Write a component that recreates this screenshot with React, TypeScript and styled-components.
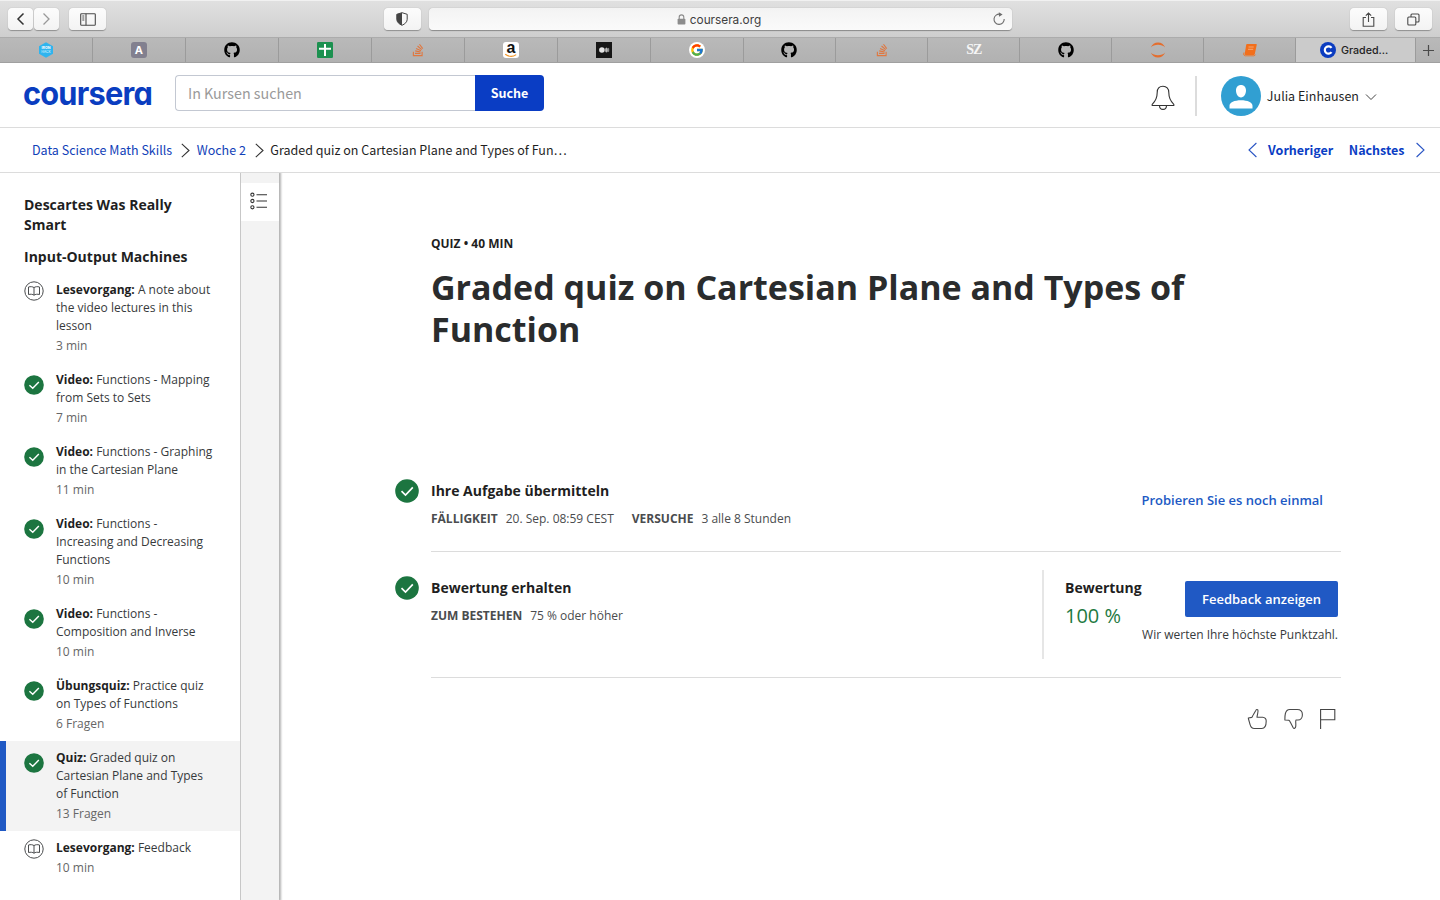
import React from 'react';
import styled, { createGlobalStyle } from 'styled-components';
import { FaGithub, FaStackOverflow } from 'react-icons/fa';
import { FcGoogle } from 'react-icons/fc';

const Global = createGlobalStyle`
  * { box-sizing: border-box; }
  body { margin: 0; background: #fff; overflow: hidden; }
  h1, h2, p, ul { margin: 0; padding: 0; font-weight: inherit; }
  button { border: 0; padding: 0; margin: 0; background: none; font: inherit; color: inherit; }
  svg { display: block; flex: none; }
`;

const sourceSans = `"Noto Sans CJK JP", "Open Sans", sans-serif`;
const openSans = `"Open Sans", "Noto Sans", sans-serif`;

const Page = styled.div`
  width: 1440px;
  height: 900px;
  display: flex;
  flex-direction: column;
  font-family: ${openSans};
  color: #1f1f1f;
  overflow: hidden;
`;

/* Browser chrome */
const Toolbar = styled.div`
  height: 38px;
  flex: none;
  display: flex;
  align-items: center;
  padding: 0 8px;
  background: linear-gradient(#e0e0e0, #cecece);
  border-top: 1px solid #f1f1f1;
  border-bottom: 1px solid #acacac;
`;
const ChromeButton = styled.button<{ $w: number; $ml?: number }>`
  width: ${p => p.$w}px;
  height: 22px;
  margin-left: ${p => p.$ml ?? 0}px;
  border-radius: 4px;
  background: linear-gradient(#fcfcfc, #f3f3f3);
  box-shadow: 0 0.5px 1px rgba(0, 0, 0, 0.32);
  display: flex;
  align-items: center;
  justify-content: center;
  color: #4a4a4a;
`;
const AddressBar = styled.div`
  width: 583px;
  height: 22px;
  margin-left: 8px;
  padding: 0 6px 0 18px;
  border-radius: 4px;
  background: linear-gradient(#f3f3f3, #fafafa);
  box-shadow: 0 0.5px 1px rgba(0, 0, 0, 0.35);
  display: flex;
  align-items: center;
  color: #6c6c6c;
`;
const Address = styled.span`
  flex: 1;
  display: flex;
  align-items: center;
  justify-content: center;
  gap: 4px;
  padding-top: 1px;
  font: 11.8px/22px Inter, sans-serif;
  color: #404040;
`;
const TabBar = styled.div`
  height: 25px;
  flex: none;
  display: flex;
  background: linear-gradient(#b9b9b9, #b1b1b1);
  border-bottom: 1px solid #a0a0a0;
`;
const Tab = styled.div<{ $w: number; $active?: boolean }>`
  width: ${p => p.$w}px;
  display: flex;
  align-items: center;
  justify-content: center;
  gap: 5px;
  padding-right: ${p => (p.$active ? 3 : 0)}px;
  border-right: 1px solid #9b9b9b;
  background: ${p => (p.$active ? '#cbcbcb' : 'transparent')};
  font: 500 10.7px/24px Inter, sans-serif;
  color: #222;
  &:last-child { border-right: 0; }
`;
const TabLabel = styled.span`
  padding-top: 1px;
`;
const Favicon = styled.span<{ $bg: string; $fg?: string; $r?: number }>`
  width: 16px;
  height: 16px;
  border-radius: ${p => p.$r ?? 3}px;
  background: ${p => p.$bg};
  color: ${p => p.$fg ?? '#fff'};
  display: flex;
  align-items: center;
  justify-content: center;
  font: 700 11px/16px Inter, sans-serif;
`;
const PaperLetters = styled.span`
  font: 700 14px/20px "Liberation Serif", serif;
  letter-spacing: -1px;
  color: #f6f6f6;
`;

/* Site header */
const Header = styled.header`
  height: 65px;
  flex: none;
  display: flex;
  align-items: center;
  padding: 0 63px 0 24px;
  border-bottom: 1px solid #dcdcdc;
  font-family: ${sourceSans};
`;
const Logo = styled.svg`
  margin-right: 22px;
  overflow: visible;
`;
const SearchField = styled.div`
  width: 300px;
  height: 36px;
  margin-top: -4px;
  padding-left: 12px;
  border: 1px solid #c3c8d2;
  border-right: 0;
  border-radius: 4px 0 0 4px;
  font-size: 14.3px;
  line-height: 34px;
  color: #9a9a9a;
`;
const SearchButton = styled.button`
  width: 69px;
  height: 36px;
  margin-top: -4px;
  border-radius: 0 4px 4px 0;
  background: #0a3dc4;
  color: #fff;
  font-size: 12.5px;
  font-weight: 700;
  line-height: 36px;
`;
const Account = styled.div`
  margin-left: auto;
  padding-top: 1px;
  display: flex;
  align-items: center;
  font-size: 12.5px;
  line-height: 20px;
`;
const Bell = styled.svg`
  margin-top: 5px;
`;
const Divider = styled.span`
  width: 2px;
  height: 40px;
  margin: 0 24px 0 20px;
  background: #dcdcdc;
`;
const UserName = styled.span`
  margin: 0 6px 0 6px;
  white-space: nowrap;
`;
const Caret = styled.svg`
  margin-top: 3px;
`;

/* Breadcrumb bar */
const CrumbBar = styled.nav`
  height: 45px;
  flex: none;
  display: flex;
  align-items: center;
  padding: 0 15px 0 32px;
  border-bottom: 1px solid #dcdcdc;
  font-family: ${sourceSans};
  font-size: 12.5px;
  line-height: 20px;
  white-space: nowrap;
`;
const Crumb = styled.span<{ $link?: boolean }>`
  color: ${p => (p.$link ? '#1141b8' : '#1f1f1f')};
`;
const CrumbArrow = styled.svg`
  margin: 0 6.5px 0 9px;
`;
const Pager = styled.div`
  margin-left: auto;
  display: flex;
  align-items: center;
  color: #0a3dc4;
  font-weight: 700;
`;
const PagerLabel = styled.span<{ $ml: number; $mr: number }>`
  margin: 0 ${p => p.$mr}px 0 ${p => p.$ml}px;
`;

/* Body */
const Body = styled.div`
  flex: 1;
  min-height: 0;
  display: flex;
`;
const Sidebar = styled.aside`
  width: 240px;
  flex: none;
  padding-top: 22px;
`;
const SectionTitle = styled.h2`
  padding: 0 24px;
  margin-bottom: 12px;
  font-size: 14px;
  font-weight: 700;
  line-height: 20px;
  & + ul { margin-top: -6px; }
`;
const Items = styled.ul`
  list-style: none;
`;
const Item = styled.li<{ $selected?: boolean }>`
  display: flex;
  align-items: flex-start;
  padding: 8px 24px 8px 18px;
  border-left: 6px solid ${p => (p.$selected ? '#2059c4' : 'transparent')};
  background: ${p => (p.$selected ? '#f3f3f3' : 'transparent')};
  background-clip: padding-box;
  font-size: 12px;
  line-height: 18px;
  color: #373a3c;
`;
const ItemIcon = styled.span<{ $done?: boolean }>`
  padding-top: ${p => (p.$done ? 4 : 0)}px;
  margin-right: 12px;
`;
const ItemKind = styled.strong`
  color: #1f1f1f;
  font-weight: 700;
`;
const ItemMeta = styled.p`
  margin-top: 2px;
  color: #666;
`;
const Rail = styled.div`
  width: 39px;
  flex: none;
  padding-top: 10px;
  background: #f3f3f3;
  border-left: 1px solid #c7c7c7;
  box-shadow: 1px 0 2px 1px rgba(0, 0, 0, 0.3);
  clip-path: inset(0 -6px 0 0);
`;
const RailButton = styled.div`
  height: 38px;
  display: flex;
  align-items: center;
  padding: 0 0 3px 9px;
  background: #fff;
`;
const Main = styled.main`
  flex: 1;
  padding: 61px 99px 0 116px;
`;
const Kicker = styled.p`
  padding-left: 36px;
  font-size: 12px;
  font-weight: 700;
  line-height: 20px;
`;
const Title = styled.h1`
  margin-top: 12px;
  padding-left: 36px;
  font-size: 34px;
  font-weight: 700;
  line-height: 42px;
  color: #2a2c2d;
`;
const Step = styled.section<{ $h: number; $mt?: number }>`
  height: ${p => p.$h}px;
  margin-top: ${p => p.$mt ?? 0}px;
  display: flex;
  align-items: flex-start;
`;
const StepContent = styled.div`
  flex: 1;
  height: 100%;
  margin-left: 12px;
  display: flex;
  align-items: flex-start;
  justify-content: space-between;
  border-bottom: 1px solid #dcdcdc;
`;
const StepTitle = styled.h2`
  font-size: 14px;
  font-weight: 700;
  line-height: 24px;
  color: #1f1f1f;
`;
const Facts = styled.p`
  margin-top: 6px;
  display: flex;
  font-size: 12px;
  line-height: 20px;
  color: #4a4c4e;
  white-space: nowrap;
`;
const FactName = styled.strong`
  margin-right: 8px;
  font-weight: 700;
`;
const FactValue = styled.span`
  margin-right: 18px;
`;
const Retry = styled.button`
  margin: 9px 18px 0 0;
  color: #2059c4;
  font-size: 13px;
  font-weight: 600;
  line-height: 24px;
`;
const GradePanel = styled.div`
  width: 299px;
  height: 89px;
  margin-top: -6px;
  padding: 6px 3px 0 21px;
  display: flex;
  justify-content: space-between;
  border-left: 2px solid #e6e6e6;
`;
const Grade = styled.div`
  width: 70px;
  font-size: 20px;
  line-height: 32px;
  color: #1f7a43;
  white-space: nowrap;
`;
const GradeAction = styled.div`
  padding-top: 5px;
  display: flex;
  flex-direction: column;
  align-items: flex-end;
`;
const FeedbackButton = styled.button`
  width: 153px;
  height: 36px;
  border-radius: 2px;
  background: #2059c4;
  color: #fff;
  font-size: 13px;
  font-weight: 600;
  line-height: 36px;
`;
const Note = styled.p`
  margin-top: 8px;
  font-size: 12px;
  line-height: 20px;
  color: #373a3c;
  white-space: nowrap;
`;
const Reactions = styled.div`
  margin: 30px 5px 0 0;
  display: flex;
  justify-content: flex-end;
  gap: 16px;
`;

const Check = ({ size }: { size: number }) => (
  <svg width={size} height={size} viewBox="0 0 24 24">
    <circle cx="12" cy="12" r="11.8" fill="#1c7540" />
    <path d="M6.500 12.200l4 3.800 7.300-7.600" fill="none" stroke="#fff" strokeWidth="1.700" />
  </svg>
);

const Book = () => (
  <svg width="20" height="20" viewBox="0 0 20 20" fill="none" stroke="#4a4c4e" strokeWidth="1">
    <circle cx="10" cy="10" r="9.200" />
    <path d="M10 6.600C8.800 5.600 6.500 5.400 4.500 6v7.500c2-.5 4.300-.3 5.500.7 1.200-1 3.500-1.200 5.500-.7V6c-2-.6-4.300-.4-5.500.6zM10 6.600v7.600" />
  </svg>
);

const Chevron = ({ w, h, dir, color }: { w: number; h: number; dir: 'left' | 'right'; color: string }) => (
  <svg width={w} height={h} viewBox="0 0 9 16" fill="none" stroke={color} strokeWidth="1.1">
    <path d={dir === 'right' ? 'M.6 1l7.400 7-7.400 7' : 'M8.400 1L1 8l7.400 7'} />
  </svg>
);

const HexIcon = () => (
  <svg width="16" height="16" viewBox="0 0 16 16">
    <path d="M8 .3l7 3.900v7.600l-7 3.900-7-3.900V4.200z" fill="#2fb4ee" />
    <text x="8" y="7.300" textAnchor="middle" fontSize="3.600" fontWeight="700" fontFamily="Inter" fill="#fff">IRON</text>
    <text x="8" y="11" textAnchor="middle" fontSize="3.300" fontFamily="Inter" fill="#d6f1fd">HACK</text>
  </svg>
);
const SheetIcon = () => (
  <svg width="16" height="16" viewBox="0 0 16 16">
    <rect width="16" height="16" rx="1.200" fill="#1c9150" />
    <path d="M2 6.700h12M8 2v12" stroke="#fff" strokeWidth="2" />
  </svg>
);
const StoreIcon = () => (
  <svg width="16" height="16" viewBox="0 0 16 16" overflow="visible">
    <rect width="16" height="16" rx="3" fill="#fff" />
    <text x="8" y="10.800" textAnchor="middle" fontSize="16" fontWeight="700" fontFamily="Liberation Sans" fill="#111">a</text>
    <path d="M2.200 12.200c3.600 2.600 8 2.600 11 .4" fill="none" stroke="#f3982a" strokeWidth="1.100" />
  </svg>
);
const MediumIcon = () => (
  <svg width="16" height="16" viewBox="0 0 16 16">
    <rect width="16" height="16" fill="#161616" />
    <circle cx="5.900" cy="8" r="2.800" fill="#e3e3e3" />
    <ellipse cx="10.500" cy="8" rx="1.400" ry="2.600" fill="#b9b9b9" />
    <ellipse cx="12.700" cy="8" rx=".5" ry="2.300" fill="#aaa" />
  </svg>
);
const JupyterIcon = () => (
  <svg width="16" height="16" viewBox="0 0 16 16" fill="#e46e2e">
    <path d="M.8 5.400C2 2.300 4.800.4 8 .4s6 1.900 7.200 5C13.500 3.700 11 2.700 8 2.700S2.500 3.700.8 5.400z" />
    <path d="M.8 10.600c1.200 3.100 4 5 7.200 5s6-1.900 7.200-5C13.500 12.300 11 13.300 8 13.300s-5.500-1-7.200-2.700z" />
  </svg>
);
const NotebookIcon = () => (
  <svg width="14" height="14" viewBox="0 0 14 14">
    <path d="M4 1h9c.6 0 .8.400.7.900l-1.900 9.200c-.1.500-.4.800-.9.800H2.500c-.6 0-.9-.4-.8-.9L3.200 1.700c.1-.4.4-.7.800-.7z" fill="#f26f1c" />
    <path d="M1 9.500c-.8 2 0 3.300 1.300 3.300h8.500c.9 0 1.300-.5 1.500-1.200" fill="none" stroke="#f26f1c" strokeWidth=".9" />
    <path d="M5.500 4h5.200M5 6.300h5.200" stroke="#f8b68c" strokeWidth=".8" />
  </svg>
);

type Entry = { kind: string; name: string; meta: string; done?: boolean; selected?: boolean };
const entries: Entry[] = [
  { kind: 'Lesevorgang:', name: 'A note about the video lectures in this lesson', meta: '3 min' },
  { kind: 'Video:', name: 'Functions - Mapping from Sets to Sets', meta: '7 min', done: true },
  { kind: 'Video:', name: 'Functions - Graphing in the Cartesian Plane', meta: '11 min', done: true },
  { kind: 'Video:', name: 'Functions - Increasing and Decreasing Functions', meta: '10 min', done: true },
  { kind: 'Video:', name: 'Functions - Composition and Inverse', meta: '10 min', done: true },
  { kind: 'Übungsquiz:', name: 'Practice quiz on Types of Functions', meta: '6 Fragen', done: true },
  { kind: 'Quiz:', name: 'Graded quiz on Cartesian Plane and Types of Function', meta: '13 Fragen', done: true, selected: true },
  { kind: 'Lesevorgang:', name: 'Feedback', meta: '10 min' },
];

const Stack = () => <FaStackOverflow size={14} color="#e0773f" />;
const GitHub = () => <FaGithub size={16} color="#000" />;
const tabs: { w: number; icon: React.ReactNode }[] = [
  { w: 93, icon: <HexIcon /> },
  { w: 93, icon: <Favicon $bg="#82808f">A</Favicon> },
  { w: 93, icon: <GitHub /> },
  { w: 93, icon: <SheetIcon /> },
  { w: 93, icon: <Stack /> },
  { w: 93, icon: <StoreIcon /> },
  { w: 93, icon: <MediumIcon /> },
  { w: 93, icon: <Favicon $bg="#fff" $r={8}><FcGoogle size={14} /></Favicon> },
  { w: 93, icon: <GitHub /> },
  { w: 92, icon: <Stack /> },
  { w: 92, icon: <PaperLetters>SZ</PaperLetters> },
  { w: 92, icon: <GitHub /> },
  { w: 92, icon: <JupyterIcon /> },
  { w: 92, icon: <NotebookIcon /> },
];

export default function App() {
  return (
    <Page>
      <Global />
      <Toolbar>
        <ChromeButton $w={25}>
          <svg width="9" height="14" viewBox="0 0 9 14" fill="none" stroke="#333" strokeWidth="1.500"><path d="M7.500 1.500L2 7l5.500 5.500" /></svg>
        </ChromeButton>
        <ChromeButton $w={25} $ml={1}>
          <svg width="9" height="14" viewBox="0 0 9 14" fill="none" stroke="#999" strokeWidth="1.300"><path d="M1.500 1.500L7 7l-5.500 5.500" /></svg>
        </ChromeButton>
        <ChromeButton $w={37} $ml={10}>
          <svg width="16" height="13" viewBox="0 0 16 13" fill="none" stroke="#4a4a4a" strokeWidth="1.100">
            <rect x=".7" y=".7" width="14.600" height="11.600" rx=".8" />
            <path d="M6 .7v11.600M2.300 3h2M2.300 5h2M2.300 7h2" />
          </svg>
        </ChromeButton>
        <ChromeButton $w={37} $ml={277.5}>
          <svg width="12" height="14" viewBox="0 0 12 14">
            <path d="M6 .7l5.200 1.600v5c0 2.700-2.200 4.700-5.200 6-3-1.300-5.200-3.300-5.200-6v-5z" fill="none" stroke="#444" strokeWidth="1" />
            <path d="M6 .7v12.600c-3-1.300-5.200-3.300-5.200-6v-5z" fill="#444" />
          </svg>
        </ChromeButton>
        <AddressBar>
          <Address>
            <svg width="9" height="11" viewBox="0 0 9 11">
              <path d="M2.200 5V3.200a2.300 2.300 0 014.600 0V5" fill="none" stroke="#8c8c8c" strokeWidth="1.100" />
              <rect x=".6" y="4.700" width="7.800" height="5.800" rx=".8" fill="#8c8c8c" />
            </svg>
            coursera.org
          </Address>
          <svg width="14" height="14" viewBox="0 0 14 14">
            <path d="M8.200 2.300A5.100 5.100 0 1012.200 7" fill="none" stroke="#6c6c6c" strokeWidth="1.100" />
            <path d="M6.800.2l3.800 2.200-3.600 2.400z" fill="#6c6c6c" />
          </svg>
        </AddressBar>
        <ChromeButton $w={37} $ml={338}>
          <svg width="13" height="15" viewBox="0 0 13 15" fill="none" stroke="#4a4a4a" strokeWidth="1.100">
            <path d="M4 5.500H1.200v8.700h10.600V5.500H9M6.500 10V1.200M3.800 3.700l2.700-2.700 2.700 2.700" />
          </svg>
        </ChromeButton>
        <ChromeButton $w={37} $ml={8}>
          <svg width="13" height="13" viewBox="0 0 13 13" fill="none" stroke="#4a4a4a" strokeWidth="1.100">
            <rect x=".8" y="4" width="8" height="8" rx="1" />
            <path d="M4 4V2c0-.7.300-1 1-1h6c.7 0 1 .3 1 1v6c0 .7-.3 1-1 1H9" />
          </svg>
        </ChromeButton>
      </Toolbar>
      <TabBar>
        {tabs.map((t, i) => <Tab key={i} $w={t.w}>{t.icon}</Tab>)}
        <Tab $w={120} $active>
          <Favicon $bg="#0b3cc0" $r={8}>
            <svg width="10" height="10" viewBox="0 0 10 10" fill="none" stroke="#fff" strokeWidth="2.200"><path d="M8.500 7.200a3.700 3.700 0 110-4.400" /></svg>
          </Favicon>
          <TabLabel>Graded...</TabLabel>
        </Tab>
        <Tab $w={24}>
          <svg width="11" height="11" viewBox="0 0 11 11" stroke="#4a4a4a" strokeWidth="1.200"><path d="M5.500 0v11M0 5.500h11" /></svg>
        </Tab>
      </TabBar>

      <Header>
        <Logo width="129" height="32" viewBox="0 0 129 32">
          <text x="-1" y="25.500" textLength="129" lengthAdjust="spacingAndGlyphs" fontFamily="Inter" fontSize="32" fontWeight="700" letterSpacing="-.8" fill="#0a3dc0" style={{ fontFeatureSettings: '"cv11"' }}>coursera</text>
        </Logo>
        <SearchField>In Kursen suchen</SearchField>
        <SearchButton>Suche</SearchButton>
        <Account>
          <Bell width="24" height="26" viewBox="0 0 24 26" fill="none" stroke="#333" strokeWidth="1.100">
            <path d="M12 1.200c-3.500 0-5.800 2.400-5.800 6.300 0 6-1.500 8.500-5 11.800v1.200h21.600v-1.200c-3.500-3.300-5-5.800-5-11.800 0-3.900-2.300-6.300-5.800-6.300zM8.500 20.500c0 2.300 1.400 3.900 3.500 3.900s3.500-1.600 3.500-3.900" />
          </Bell>
          <Divider />
          <svg width="40" height="40" viewBox="0 0 40 40">
            <circle cx="20" cy="20" r="20" fill="#319fd2" />
            <path d="M20 9c3 0 5 2.200 5 5.500S23 21.500 20 21.500s-5-3.700-5-7S17 9 20 9zM8.500 32.500v-2.800c0-3.300 5-5.500 11.500-5.500s11.500 2.200 11.500 5.500v2.800z" fill="#fff" />
          </svg>
          <UserName>Julia Einhausen</UserName>
          <Caret width="12" height="8" viewBox="0 0 12 8" fill="none" stroke="#444" strokeWidth="1"><path d="M1 1.500l5 5 5-5" /></Caret>
        </Account>
      </Header>

      <CrumbBar>
        <Crumb $link>Data Science Math Skills</Crumb>
        <CrumbArrow width="9" height="15" viewBox="0 0 9 15" fill="none" stroke="#333" strokeWidth="1.100"><path d="M.8 .8l7.200 6.700-7.200 6.700" /></CrumbArrow>
        <Crumb $link>Woche 2</Crumb>
        <CrumbArrow width="9" height="15" viewBox="0 0 9 15" fill="none" stroke="#333" strokeWidth="1.100"><path d="M.8 .8l7.200 6.700-7.200 6.700" /></CrumbArrow>
        <Crumb>Graded quiz on Cartesian Plane and Types of Fun…</Crumb>
        <Pager>
          <Chevron w={9} h={16} dir="left" color="#2a55c4" />
          <PagerLabel $ml={11.5} $mr={8}>Vorheriger</PagerLabel>
          <PagerLabel $ml={7.5} $mr={11.5}>Nächstes</PagerLabel>
          <Chevron w={9} h={16} dir="right" color="#2a55c4" />
        </Pager>
      </CrumbBar>

      <Body>
        <Sidebar>
          <SectionTitle>Descartes Was Really Smart</SectionTitle>
          <SectionTitle>Input-Output Machines</SectionTitle>
          <Items>
            {entries.map((e, i) => (
              <Item key={i} $selected={e.selected}>
                <ItemIcon $done={e.done}>{e.done ? <Check size={20} /> : <Book />}</ItemIcon>
                <div>
                  <p><ItemKind>{e.kind}</ItemKind> {e.name}</p>
                  <ItemMeta>{e.meta}</ItemMeta>
                </div>
              </Item>
            ))}
          </Items>
        </Sidebar>
        <Rail>
          <RailButton>
            <svg width="18" height="18" viewBox="0 0 18 18" fill="none" stroke="#333" strokeWidth="1.100">
              <circle cx="2.400" cy="2.700" r="1.600" /><circle cx="2.400" cy="9" r="1.600" /><circle cx="2.400" cy="15.300" r="1.600" />
              <path d="M6.500 2.700H17M6.500 9H17M6.500 15.300H17" />
            </svg>
          </RailButton>
        </Rail>
        <Main>
          <Kicker>QUIZ • 40 MIN</Kicker>
          <Title>Graded quiz on Cartesian Plane and Types of Function</Title>
          <Step $h={73} $mt={129}>
            <Check size={24} />
            <StepContent>
              <div>
                <StepTitle>Ihre Aufgabe übermitteln</StepTitle>
                <Facts>
                  <FactName>FÄLLIGKEIT</FactName><FactValue>20. Sep. 08:59 CEST</FactValue>
                  <FactName>VERSUCHE</FactName><FactValue>3 alle 8 Stunden</FactValue>
                </Facts>
              </div>
              <Retry>Probieren Sie es noch einmal</Retry>
            </StepContent>
          </Step>
          <Step $h={102} $mt={24}>
            <Check size={24} />
            <StepContent>
              <div>
                <StepTitle>Bewertung erhalten</StepTitle>
                <Facts><FactName>ZUM BESTEHEN</FactName><FactValue>75 % oder höher</FactValue></Facts>
              </div>
              <GradePanel>
                <Grade>
                  <StepTitle>Bewertung</StepTitle>
                  100 %
                </Grade>
                <GradeAction>
                  <FeedbackButton>Feedback anzeigen</FeedbackButton>
                  <Note>Wir werten Ihre höchste Punktzahl.</Note>
                </GradeAction>
              </GradePanel>
            </StepContent>
          </Step>
          <Reactions>
            <svg width="20" height="22" viewBox="0 0 20 22" fill="none" stroke="#4a4a4a" strokeWidth="1.100" strokeLinejoin="round">
              <path d="M1.300 10l3.500-.6c.6-.8.8-1.600 1.500-2.600L8.800 2.400c.4-1 1.500-1.300 2-.5.900 1.400-.6 4.300-.8 7.300h5.600c2.600.2 3.600 1.600 3.600 3.800 0 4.500-1.400 7.500-4.400 7.500H7.200c-2.500 0-3.500-1.800-4.200-4.200L1.500 11z" />
            </svg>
            <svg width="20" height="22" viewBox="-.7 0 20 22" fill="none" stroke="#4a4a4a" strokeWidth="1.100" strokeLinejoin="round">
              <path d="M1.200 12c0-2.500-.1-4.200.5-6.500C2.500 2.500 3.700 1.500 6 1.500h7.500c3.300 0 5.200 2.300 5.200 5.200 0 3.200-2 5.300-4.400 5.300h-2c-.8 1.300.2 3.400-.3 6.600-.2 1.700-1.700 2.400-2.500 1.100L6.800 14.500c-.5-1-.8-1.800-1.700-2.300z" />
            </svg>
            <svg width="17" height="22" viewBox="0 0 17 22" fill="none" stroke="#444" strokeWidth="1.100">
              <path d="M1.600 21V1.500h14.200v10.200H1.600" />
            </svg>
          </Reactions>
        </Main>
      </Body>
    </Page>
  );
}
